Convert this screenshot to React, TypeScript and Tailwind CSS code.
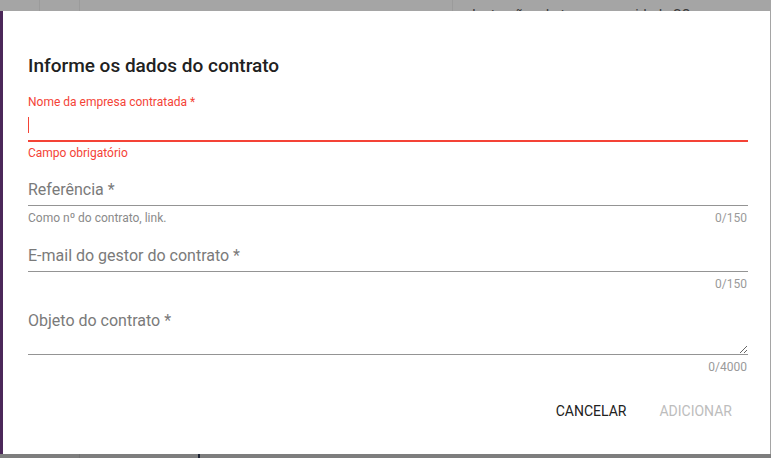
import { useState } from 'react'

type Field = {
  label: string
  helper?: string
  max: number
  multiline?: boolean
}

const FIELDS: Field[] = [
  { label: 'Referência *', helper: 'Como nº do contrato, link.', max: 150 },
  { label: 'E-mail do gestor do contrato *', max: 150 },
  { label: 'Objeto do contrato *', max: 4000, multiline: true },
]

function Backdrop() {
  return (
    <div className="flex h-full w-full flex-col">
      <div className="flex flex-1 bg-[#a5a5a5]">
        <div className="w-[40px] border-r border-[#9b9b9b]" />
        <div className="w-[40px] border-r border-[#9b9b9b]" />
        <div className="w-[373px] border-r border-[#9b9b9b]" />
        <div className="flex-1 pl-[19px] pt-[7px] text-[14px] leading-[16px] text-[#3a3a3a]">
          Instruções do termo na unidade SO
        </div>
      </div>
      <div className="flex h-[4px] bg-[#7e7e7e]">
        <div className="w-[80px] border-r border-[#747474]" />
        <div className="w-[118px]" />
        <div className="w-[2px] bg-[#1d2433]" />
      </div>
    </div>
  )
}

function Counter({ value, max, helper }: { value: string; max: number; helper?: string }) {
  return (
    <div className="mt-[4px] flex h-[16px] items-center justify-between text-[12px] leading-[16px]">
      <span className="text-[#8a8a8a]">{helper}</span>
      <span className="pr-[1px] text-[#9a9a9a]">{value.length}/{max}</span>
    </div>
  )
}

export default function App() {
  const [empresa, setEmpresa] = useState('')
  const [values, setValues] = useState<string[]>(['', '', ''])

  const update = (i: number, v: string) =>
    setValues(prev => prev.map((p, j) => (j === i ? v : p)))

  return (
    <div className="relative h-[458px] w-[771px] overflow-hidden font-['Roboto',sans-serif]">
      <Backdrop />

      <div className="absolute left-0 top-[11px] flex h-[443px] w-[770px] flex-col border-l-[3px] border-[#4b2759] bg-white pl-[25px] pr-[22px]">
        <h2 className="mt-[43px] h-[24px] text-[19px] font-medium leading-[24px] text-[#212121]">
          Informe os dados do contrato
        </h2>

        {/* campo com erro */}
        <div className="mt-[16px]">
          <label className="block h-[16px] text-[12px] leading-[16px] text-[#f44336]">
            Nome da empresa contratada *
          </label>
          <div className="flex h-[32px] items-center border-b-2 border-[#f44336]">
            <span className="h-[16px] w-px bg-[#f44336]" />
            <input
              value={empresa}
              onChange={e => setEmpresa(e.target.value)}
              className="h-full flex-1 bg-transparent text-[16px] text-[#212121] outline-none"
              aria-label="Nome da empresa contratada"
            />
          </div>
          <p className="mt-[3px] h-[16px] text-[12px] leading-[16px] text-[#f44336]">Campo obrigatório</p>
        </div>

        {FIELDS.map((f, i) => (
          <div key={f.label} className={i === 0 ? 'mt-[12px]' : 'mt-[13px]'}>
            {f.multiline ? (
              <div className="relative h-[50px] border-b border-[#949494]">
                <textarea
                  value={values[i]}
                  onChange={e => update(i, e.target.value)}
                  placeholder={f.label}
                  className="block h-[49px] w-full resize-y bg-transparent pt-[6px] text-[16px] leading-[19px] text-[#212121] outline-none placeholder:text-[#7a7a7a]"
                />
              </div>
            ) : (
              <div className="flex h-[33px] items-center border-b border-[#949494]">
                <input
                  value={values[i]}
                  onChange={e => update(i, e.target.value)}
                  placeholder={f.label}
                  className="h-full flex-1 bg-transparent text-[16px] text-[#212121] outline-none placeholder:text-[#7a7a7a]"
                />
              </div>
            )}
            <Counter value={values[i]} max={f.max} helper={f.helper} />
          </div>
        ))}

        <div className="mt-[18px] flex justify-end gap-[17px] pr-[8px]">
          <button
            type="button"
            className="h-[36px] rounded px-[8px] text-[14px] font-normal uppercase text-[#212121]"
          >
            Cancelar
          </button>
          <button
            type="button"
            disabled
            className="h-[36px] rounded px-[8px] text-[14px] font-normal uppercase text-[#bdbdbd]"
          >
            Adicionar
          </button>
        </div>
      </div>
    </div>
  )
}
